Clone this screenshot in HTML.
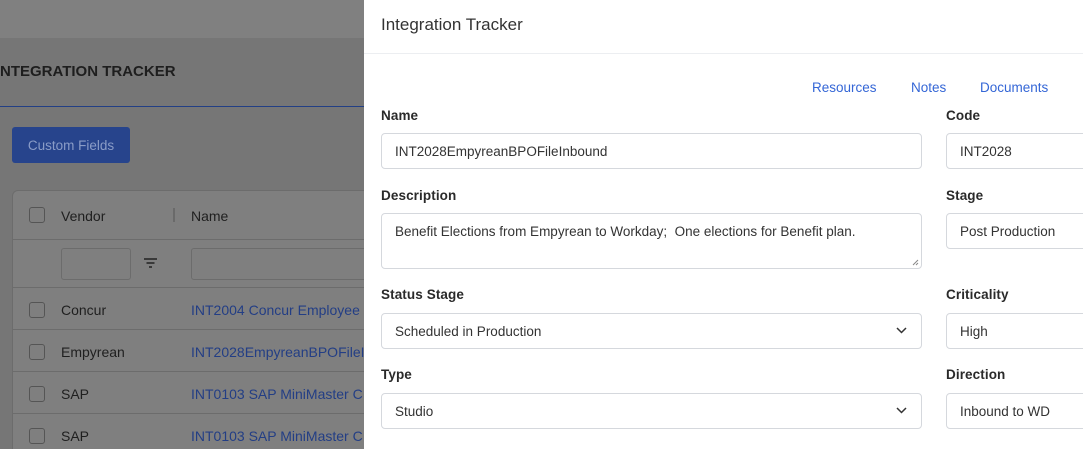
<!DOCTYPE html>
<html><head><meta charset="utf-8"><style>
*{box-sizing:border-box;margin:0;padding:0}
html,body{width:1083px;height:449px;overflow:hidden}
body{position:relative;font-family:"Liberation Sans",sans-serif;background:#777}
.a{position:absolute}
.cb{position:absolute;width:16px;height:16px;border:1px solid #555;border-radius:3px;left:29px}
.row{position:absolute;left:12px;width:352px;height:1px;background:#6c6c6c}
.vt{position:absolute;left:61px;font-size:14px;color:#1f1f1f}
.lk{position:absolute;left:191px;font-size:14px;color:#233e85;white-space:nowrap}
.panel{position:absolute;left:364px;top:0;width:719px;height:449px;background:#fff;overflow:hidden}
.lbl{position:absolute;font-size:13.5px;color:#2a2a2a;font-weight:bold;letter-spacing:0.1px}
.inp{position:absolute;border:1px solid #d5d8dd;border-radius:4px;font-size:13.5px;color:#333;padding-left:13px;display:flex;align-items:center;white-space:nowrap}
.chev{position:absolute;right:14px;top:50%;margin-top:-4px}
.tab{position:absolute;top:80px;font-size:13.5px;color:#3466d6}
</style></head><body>
<div class="a" style="left:0;top:0;width:364px;height:38px;background:#808080"></div>
<div class="a" style="left:0;top:38px;width:364px;height:411px;background:#767676"></div>
<div class="a" style="left:0;top:63px;font-size:15px;font-weight:bold;color:#1e1e1e">NTEGRATION TRACKER</div>
<div class="a" style="left:0;top:106px;width:364px;height:1px;background:#223f85"></div>
<div class="a" style="left:12px;top:127px;width:118px;height:36px;background:#27448c;border-radius:3px;color:#8a9cc7;font-size:13.5px;display:flex;align-items:center;justify-content:center">Custom Fields</div>
<div class="a" style="left:12px;top:190px;width:360px;height:270px;background:#7f7f7f;border:1px solid #6c6c6c;border-radius:6px"></div>
<div class="cb" style="top:207px"></div>
<div class="vt" style="top:208px">Vendor</div>
<div class="a" style="left:173px;top:208px;width:2px;height:14px;background:#6a6a6a"></div>
<div class="a" style="left:191px;top:208px;font-size:14px;color:#1f1f1f">Name</div>
<div class="row" style="top:239px"></div>
<div class="a" style="left:61px;top:248px;width:70px;height:32px;border:1px solid #6c6c6c;border-radius:3px"></div>
<div class="a" style="left:191px;top:248px;width:180px;height:32px;border:1px solid #6c6c6c;border-radius:3px"></div>
<svg class="a" style="left:143px;top:257px" width="15" height="12"><path d="M1 2h13M3.5 6h8M6 10h3" stroke="#222" stroke-width="1.6"/></svg>
<div class="row" style="top:287px"></div>
<div class="cb" style="top:302px"></div><div class="vt" style="top:302px">Concur</div><div class="lk" style="top:302px">INT2004 Concur Employee</div>
<div class="row" style="top:329px"></div>
<div class="cb" style="top:344px"></div><div class="vt" style="top:344px">Empyrean</div><div class="lk" style="top:344px">INT2028EmpyreanBPOFileI</div>
<div class="row" style="top:371px"></div>
<div class="cb" style="top:386px"></div><div class="vt" style="top:386px">SAP</div><div class="lk" style="top:386px">INT0103 SAP MiniMaster C</div>
<div class="row" style="top:413px"></div>
<div class="cb" style="top:428px"></div><div class="vt" style="top:428px">SAP</div><div class="lk" style="top:428px">INT0103 SAP MiniMaster C</div>

<div class="panel">
<div class="a" style="left:17px;top:15px;font-size:17px;color:#333">Integration Tracker</div>
<div class="a" style="left:0;top:53px;width:719px;height:1px;background:#eceef1"></div>
<div class="tab" style="left:448px">Resources</div>
<div class="tab" style="left:547px">Notes</div>
<div class="tab" style="left:616px">Documents</div>
<div class="lbl" style="left:17px;top:108px">Name</div>
<div class="lbl" style="left:582px;top:108px">Code</div>
<div class="inp" style="left:17px;top:133px;width:541px;height:36px">INT2028EmpyreanBPOFileInbound</div>
<div class="inp" style="left:582px;top:133px;width:160px;height:36px">INT2028</div>
<div class="lbl" style="left:17px;top:188px">Description</div>
<div class="lbl" style="left:582px;top:188px">Stage</div>
<div class="inp" style="left:17px;top:213px;width:541px;height:56px;align-items:flex-start;padding-top:10px">Benefit Elections from Empyrean to Workday;&nbsp; One elections for Benefit plan.
<svg style="position:absolute;right:2px;bottom:2px" width="7" height="7"><path d="M6 1L1 6M6 4L4 6" stroke="#888" stroke-width="1"/></svg></div>
<div class="inp" style="left:582px;top:213px;width:160px;height:36px">Post Production</div>
<div class="lbl" style="left:17px;top:287px">Status Stage</div>
<div class="lbl" style="left:582px;top:287px">Criticality</div>
<div class="inp" style="left:17px;top:313px;width:541px;height:36px">Scheduled in Production<svg class="chev" width="11" height="7"><path d="M1 1l4.5 4.5L10 1" stroke="#333" stroke-width="1.5" fill="none"/></svg></div>
<div class="inp" style="left:582px;top:313px;width:160px;height:36px">High</div>
<div class="lbl" style="left:17px;top:367px">Type</div>
<div class="lbl" style="left:582px;top:367px">Direction</div>
<div class="inp" style="left:17px;top:393px;width:541px;height:36px">Studio<svg class="chev" width="11" height="7"><path d="M1 1l4.5 4.5L10 1" stroke="#333" stroke-width="1.5" fill="none"/></svg></div>
<div class="inp" style="left:582px;top:393px;width:160px;height:36px">Inbound to WD</div>
</div>
</body></html>
